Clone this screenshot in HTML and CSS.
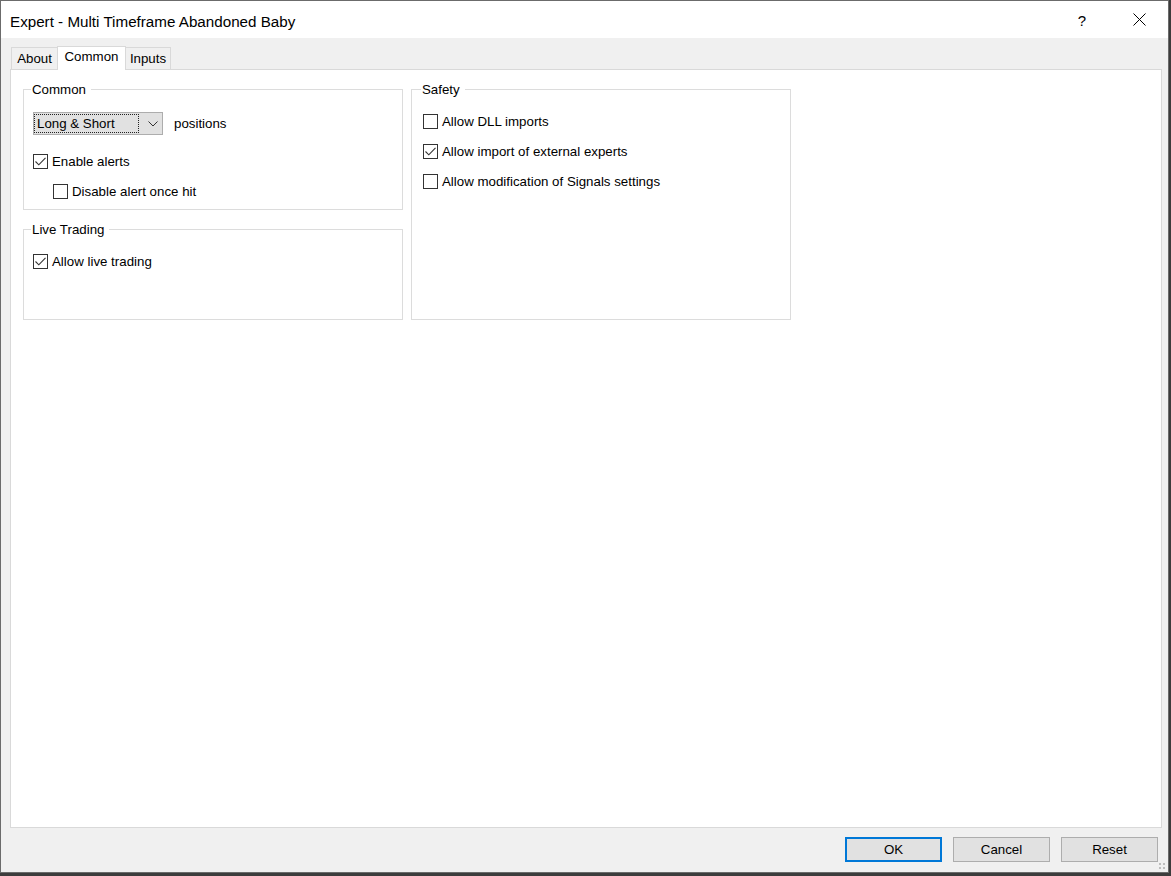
FILE: index.html
```html
<!DOCTYPE html>
<html>
<head>
<meta charset="utf-8">
<title>Expert - Multi Timeframe Abandoned Baby</title>
<link rel="stylesheet" href="styles.css">
</head>
<body>
<div class="dialog">
  <div class="titlebar">
    <div class="title">Expert - Multi Timeframe Abandoned Baby</div>
    <div class="title-btns">
      <div class="title-btn help">?</div>
      <div class="title-btn close">
        <svg width="13" height="13" viewBox="0 0 13 13"><path d="M0.5 0.5 L12.5 12.5 M12.5 0.5 L0.5 12.5" stroke="#000" stroke-width="1" fill="none"/></svg>
      </div>
    </div>
  </div>
  <div class="body">
    <div class="tabs">
      <div class="tab tab-about">About</div>
      <div class="tab tab-common active">Common</div>
      <div class="tab tab-inputs">Inputs</div>
    </div>
    <div class="panel">
      <div class="groups">
        <div class="col">
          <fieldset class="group group-common">
            <legend>Common</legend>
            <div class="select-row">
              <div class="select">
                <div class="select-text">Long &amp; Short</div>
                <svg class="chev" width="10" height="6" viewBox="0 0 10 6"><path d="M0.5 0.5 L5 5 L9.5 0.5" stroke="#333" stroke-width="1" fill="none"/></svg>
              </div>
              <span class="select-label">positions</span>
            </div>
            <div class="check-row first">
              <span class="box checked"><svg width="13" height="13" viewBox="0 0 13 13"><path d="M1.5 6.5 L4.8 9.8 L11.5 2.8" stroke="#333" stroke-width="1.1" fill="none"/></svg></span>
              <span>Enable alerts</span>
            </div>
            <div class="check-row indent">
              <span class="box"></span>
              <span>Disable alert once hit</span>
            </div>
          </fieldset>
          <fieldset class="group group-live">
            <legend>Live Trading</legend>
            <div class="check-row">
              <span class="box checked"><svg width="13" height="13" viewBox="0 0 13 13"><path d="M1.5 6.5 L4.8 9.8 L11.5 2.8" stroke="#333" stroke-width="1.1" fill="none"/></svg></span>
              <span>Allow live trading</span>
            </div>
          </fieldset>
        </div>
        <fieldset class="group group-safety">
          <legend>Safety</legend>
          <div class="check-row">
            <span class="box"></span>
            <span>Allow DLL imports</span>
          </div>
          <div class="check-row">
            <span class="box checked"><svg width="13" height="13" viewBox="0 0 13 13"><path d="M1.5 6.5 L4.8 9.8 L11.5 2.8" stroke="#333" stroke-width="1.1" fill="none"/></svg></span>
            <span>Allow import of external experts</span>
          </div>
          <div class="check-row">
            <span class="box"></span>
            <span>Allow modification of Signals settings</span>
          </div>
        </fieldset>
      </div>
    </div>
  </div>
  <div class="footer">
    <button class="btn default">OK</button>
    <button class="btn">Cancel</button>
    <button class="btn">Reset</button>
  </div>
  <svg class="grip" width="7" height="7" viewBox="0 0 7 7">
    <rect x="0" y="0" width="2" height="2" fill="#bdbdbd"/>
    <rect x="4" y="0" width="2" height="2" fill="#bdbdbd"/>
    <rect x="0" y="4" width="2" height="2" fill="#bdbdbd"/>
    <rect x="4" y="4" width="2" height="2" fill="#bdbdbd"/>
  </svg>
</div>
</body>
</html>
```
FILE: styles.css
```css
html, body {
  margin: 0;
  padding: 0;
}
body {
  background: #3c3c3c;
  font-family: "Liberation Sans", Arial, sans-serif;
  font-size: 13.3px;
  color: #000;
}
.dialog {
  position: relative;
  width: 1169px;
  height: 873px;
  box-sizing: border-box;
  border: 1px solid #6b6b6b;
  background: #f0f0f0;
  display: flex;
  flex-direction: column;
}
.titlebar {
  height: 37px;
  background: #fff;
  display: flex;
  align-items: center;
  flex: none;
}
.title {
  font-size: 15.2px;
  padding-left: 9px;
  padding-top: 3px;
}
.title-btns {
  margin-left: auto;
  display: flex;
  gap: 11px;
  padding-right: 6px;
  height: 100%;
}
.title-btn {
  width: 46px;
  height: 100%;
  display: flex;
  align-items: center;
  justify-content: center;
}
.help {
  font-size: 15px;
  padding-top: 1px;
}
.body {
  flex: 1;
  display: flex;
  flex-direction: column;
  padding: 8px 6px 0 9px;
  min-height: 0;
}
.tabs {
  display: flex;
  align-items: flex-end;
  height: 24px;
  margin-left: 1px;
  margin-bottom: -1px;
  position: relative;
  z-index: 1;
  flex: none;
}
.tab {
  box-sizing: border-box;
  height: 22px;
  margin-bottom: 1px;
  border: 1px solid #d9d9d9;
  border-bottom: none;
  background: #f0f0f0;
  display: flex;
  align-items: center;
  justify-content: center;
  line-height: 16px;
  padding-top: 1px;
}
.tab-about {
  width: 46px;
  border-right: none;
}
.tab-common {
  width: 69px;
}
.tab-inputs {
  width: 45px;
  border-left: none;
}
.tab.active {
  height: 24px;
  margin-bottom: 0;
  background: #fff;
  padding-top: 0;
  padding-bottom: 3px;
}
.panel {
  flex: 1;
  background: #fff;
  border: 1px solid #d9d9d9;
  padding: 11px 0 0 12px;
}
.groups {
  display: grid;
  grid-template-columns: 380px 380px;
  grid-template-rows: 239px;
  column-gap: 8px;
  align-items: stretch;
}
.col {
  display: flex;
  flex-direction: column;
  gap: 11px;
}
.group {
  margin: 0;
  padding: 0 9px;
  border: 1px solid #dcdcdc;
  min-width: 0;
  box-sizing: border-box;
}
.group legend {
  padding: 0 5px 0 1px;
  margin-left: -2px;
  line-height: 16px;
  height: 16px;
  padding-top: 1px;
}
.group-common {
  padding-top: 14px;
  padding-bottom: 3px;
  flex: none;
}
.group-live {
  flex: 1;
  padding-top: 8px;
}
.group-safety {
  padding-top: 8px;
  padding-left: 11px;
}
.select-row {
  display: flex;
  align-items: center;
  height: 23px;
}
.select {
  width: 130px;
  height: 23px;
  box-sizing: border-box;
  border: 1px solid #adadad;
  background: #e1e1e1;
  display: flex;
  align-items: flex-start;
}
.select-text {
  box-sizing: border-box;
  width: 105px;
  height: 19px;
  margin-top: 1px;
  border: 1px dotted #222;
  padding-left: 2px;
  line-height: 17px;
  white-space: nowrap;
}
.chev {
  margin-left: 9px;
  margin-top: 8px;
}
.select-label {
  margin-left: 11px;
}
.check-row {
  display: flex;
  align-items: center;
  gap: 4px;
  height: 30px;
  white-space: nowrap;
}
.check-row.first {
  margin-top: 11px;
}
.check-row.indent {
  padding-left: 20px;
}
.box {
  box-sizing: border-box;
  width: 15px;
  height: 15px;
  border: 1px solid #333;
  background: #fff;
  display: flex;
  align-items: center;
  justify-content: center;
  flex: none;
}
.footer {
  height: 44px;
  box-sizing: border-box;
  flex: none;
  display: flex;
  justify-content: flex-end;
  align-items: flex-start;
  gap: 11px;
  padding: 9px 10px 0 0;
}
.btn {
  width: 97px;
  height: 25px;
  box-sizing: border-box;
  border: 1px solid #adadad;
  background: #e1e1e1;
  font-family: "Liberation Sans", Arial, sans-serif;
  font-size: 13.3px;
  color: #000;
  padding: 0;
  margin: 0;
}
.btn.default {
  border: 2px solid #0078d7;
}
.grip {
  position: absolute;
  right: 2px;
  bottom: 2px;
}
```
